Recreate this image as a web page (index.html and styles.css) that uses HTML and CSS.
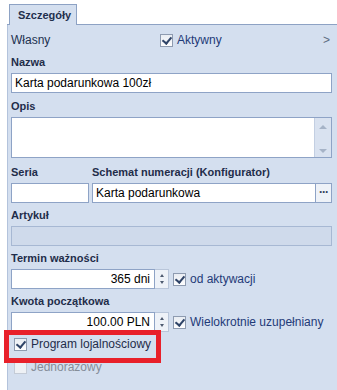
FILE: index.html
```html
<!DOCTYPE html>
<html lang="pl">
<head>
    <meta charset="UTF-8">
    <title>Szczegóły</title>
    <link rel="stylesheet" href="styles.css">
</head>
<body>
    <div class="tabs"><div class="tab">Szczegóły</div></div>
    <div class="panel">
        <div class="toprow">
            <span class="own">Własny</span>
            <label class="chk"><span class="box on"></span>Aktywny</label>
            <span class="more">&gt;</span>
        </div>

        <div class="lbl">Nazwa</div>
        <div class="inp">Karta podarunkowa 100zł</div>

        <div class="lbl lbl-opis">Opis</div>
        <div class="area">
            <div class="area-txt"></div>
            <div class="scroll"><span class="up"></span><span class="down"></span></div>
        </div>

        <div class="pair">
            <div class="col-seria">
                <div class="lbl">Seria</div>
                <div class="inp"></div>
            </div>
            <div class="col-schemat">
                <div class="lbl">Schemat numeracji (Konfigurator)</div>
                <div class="inp-btn">
                    <div class="inp">Karta podarunkowa</div>
                    <div class="dots">···</div>
                </div>
            </div>
        </div>

        <div class="lbl">Artykuł</div>
        <div class="inp disabled"></div>

        <div class="lbl">Termin ważności</div>
        <div class="numrow">
            <div class="inp num">365 dni</div>
            <div class="spin"><span class="up"></span><span class="down"></span></div>
            <label class="chk"><span class="box on"></span>od aktywacji</label>
        </div>

        <div class="lbl">Kwota początkowa</div>
        <div class="numrow">
            <div class="inp num">100.00 PLN</div>
            <div class="spin"><span class="up"></span><span class="down"></span></div>
            <label class="chk"><span class="box on"></span>Wielokrotnie uzupełniany</label>
        </div>

        <label class="chk row-chk"><span class="box on"></span>Program lojalnościowy</label>
        <label class="chk row-chk off"><span class="box"></span>Jednorazowy</label>

        <div class="mark"></div>
    </div>
</body>
</html>
```

FILE: styles.css
```css
body { margin: 0; background: #fff; font-family: "Liberation Sans", Arial, sans-serif; font-size: 12px; color: #1c2a44; width: 337px; height: 390px; overflow: hidden; }

.tabs { height: 24px; border-bottom: 1px solid #8da2c4; margin-left: 7px; padding-left: 2px; display: flex; align-items: flex-end; }
.tab { width: 68px; height: 21px; margin-bottom: -1px; border: 1px solid #8da2c4; border-bottom: none; background: #d4dfef; font-weight: bold; font-size: 11px; color: #1f2f4d; padding-left: 8px; line-height: 20px; box-sizing: border-box; }

.panel { position: relative; margin-left: 7px; border-left: 1px solid #b3c3dc; background: #d4dfef; padding: 0 5px 0 3px; height: 366px; }

.toprow { display: flex; align-items: center; height: 20px; padding-top: 5px; }
.own { width: 149px; color: #22314f; }
.toprow .chk { flex: 1; }
.more { color: #5d6b82; padding-right: 2px; }

.lbl { font-weight: bold; font-size: 11px; color: #1f2d4a; line-height: 16px; margin-top: 4px; white-space: nowrap; }
.lbl-opis { margin-top: 5px; }

.inp { height: 20px; box-sizing: border-box; border: 1px solid #8ea3c6; background: #fff; color: #000; padding: 0 3px; line-height: 18px; margin-top: 3px; white-space: nowrap; overflow: hidden; }
.inp.disabled { background: #cfdaeb; border-color: #a7b8d3; }

.area { display: flex; height: 41px; margin-top: 3px; border: 1px solid #8ea3c6; box-sizing: border-box; background: #fff; }
.area-txt { flex: 1; }
.scroll { width: 16px; background: #d9e2f0; border-left: 1px solid #c3cfe2; display: flex; flex-direction: column; justify-content: space-between; align-items: center; padding: 7px 0 4px; }
.scroll .up { border: 4px solid transparent; border-top: none; border-bottom: 4px solid #a6b3c7; width: 0; height: 0; }
.scroll .down { border: 4px solid transparent; border-bottom: none; border-top: 4px solid #a6b3c7; width: 0; height: 0; }

.pair { display: flex; gap: 3px; margin-top: 2px; }
.col-seria { width: 78px; }
.col-schemat { flex: 1; }
.inp-btn { display: flex; }
.inp-btn .inp { flex: 1; }
.dots { width: 16px; height: 20px; margin-top: 3px; box-sizing: border-box; border: 1px solid #8ea3c6; border-left: none; background: #eef2f8; text-align: center; font-weight: bold; line-height: 16px; color: #33415c; letter-spacing: -1px; }

.numrow { display: flex; align-items: flex-start; }
.num { width: 144px; text-align: right; padding-right: 4px; }
.spin { width: 14px; height: 20px; margin-top: 3px; box-sizing: border-box; border: 1px solid #b9c6da; border-left: none; background: #eef2f8; display: flex; flex-direction: column; justify-content: center; align-items: center; gap: 4px; }
.spin .up { border: 2px solid transparent; border-top: none; border-bottom: 3px solid #4e5b70; width: 0; height: 0; }
.spin .down { border: 2px solid transparent; border-bottom: none; border-top: 3px solid #4e5b70; width: 0; height: 0; }
.numrow .chk { margin-left: 4px; height: 20px; margin-top: 3px; }

.chk { display: flex; align-items: center; color: #1f3a78; white-space: nowrap; }
.box { width: 13px; height: 13px; box-sizing: border-box; border: 1px solid #8e9bb0; background: linear-gradient(#e9edf3, #fdfdfe); margin-right: 4px; position: relative; }
.box.on::after { content: ""; position: absolute; left: 3px; top: 0; width: 4px; height: 7px; border: solid #2f4468; border-width: 0 2px 2px 0; transform: rotate(40deg); }
.row-chk { height: 20px; margin-top: 2px; padding-left: 3px; color: #1f2d4a; }
.row-chk + .row-chk { margin-top: 3px; }
.off { color: #858d99; }
.off .box { border-color: #c4cbd6; background: #eef1f5; }

.mark { position: absolute; left: -4px; top: 305px; width: 157px; height: 33px; box-sizing: border-box; border: 5px solid #e8202a; }
```
